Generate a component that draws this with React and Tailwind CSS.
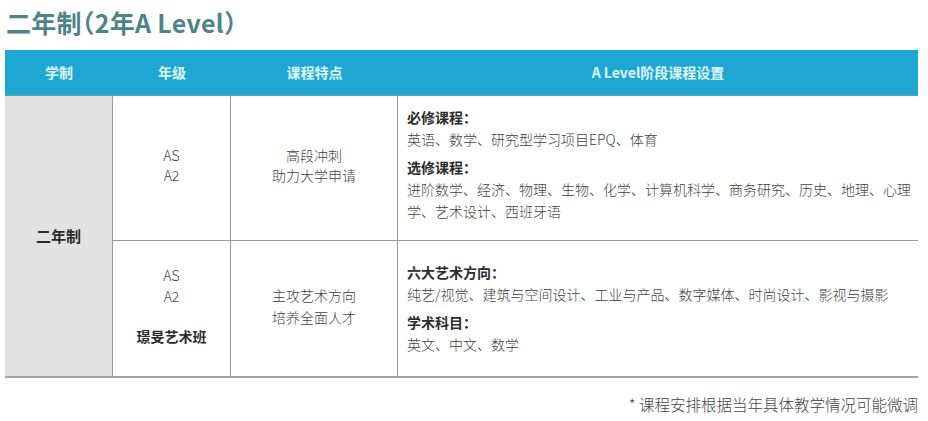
import React from 'react';

const font = { fontFamily: '"Noto Sans CJK SC", "Noto Sans", sans-serif' };

export default function App() {
  return (
    <div className="w-[928px] h-[421px] bg-white text-[#3f3f3f] overflow-hidden" style={font}>
      {/* 标题 */}
      <h1 className="pl-[6px] pt-[4px] h-[50px] text-[25px] font-bold leading-[36px] tracking-[0.3px] text-[#4f8487] [font-feature-settings:'halt']">
        二年制（2年A Level）
      </h1>

      <div className="ml-[5px] w-[913px]">
        {/* 表头 */}
        <div className="grid grid-cols-[108px_118px_167px_1fr] h-[46px] bg-[#1fa7d3] border-b border-[#5b9fb5] text-[14px] font-bold text-[#dff8ff]">
          <div className="flex items-center justify-center">学制</div>
          <div className="flex items-center justify-center">年级</div>
          <div className="flex items-center justify-center">课程特点</div>
          <div className="flex items-center justify-center">A Level阶段课程设置</div>
        </div>

        {/* 表体 */}
        <div className="grid grid-cols-[108px_118px_167px_1fr] grid-rows-[145px_135px] border-b-2 border-[#a5a5a5] text-[14px] font-light">
          <div className="row-span-2 bg-[#e2e2e2] border-r border-[#9c9c9c] flex items-center justify-center font-bold text-[15px] text-[#2b2b2b]">
            二年制
          </div>

          {/* 第一行 */}
          <div className="border-r border-b border-[#9c9c9c] flex flex-col items-center justify-center leading-[20px] pb-[6px]">
            <span>AS</span>
            <span>A2</span>
          </div>
          <div className="border-r border-b border-[#9c9c9c] flex flex-col items-center justify-center leading-[20px] pb-[6px]">
            <span>高段冲刺</span>
            <span>助力大学申请</span>
          </div>
          <div className="border-b border-[#9c9c9c] pl-[9px] pr-[2px] pt-[10px] leading-[22px]">
            <div className="font-bold text-[#2b2b2b]">必修课程：</div>
            <div>英语、数学、研究型学习项目EPQ、体育</div>
            <div className="mt-[6px] font-bold text-[#2b2b2b]">选修课程：</div>
            <div>进阶数学、经济、物理、生物、化学、计算机科学、商务研究、历史、地理、心理学、艺术设计、西班牙语</div>
          </div>

          {/* 第二行 */}
          <div className="border-r border-[#9c9c9c] flex flex-col items-center justify-center leading-[21px] pb-[6px]">
            <span>AS</span>
            <span>A2</span>
            <span className="mt-[19px] font-bold text-[#2b2b2b]">璟旻艺术班</span>
          </div>
          <div className="border-r border-[#9c9c9c] flex flex-col items-center justify-center leading-[22px] pb-[6px]">
            <span>主攻艺术方向</span>
            <span>培养全面人才</span>
          </div>
          <div className="pl-[9px] pr-[2px] pt-[20px] leading-[22px]">
            <div className="font-bold text-[#2b2b2b]">六大艺术方向：</div>
            <div>纯艺/视觉、建筑与空间设计、工业与产品、数字媒体、时尚设计、影视与摄影</div>
            <div className="mt-[6px] font-bold text-[#2b2b2b]">学术科目：</div>
            <div>英文、中文、数学</div>
          </div>
        </div>

        {/* 备注 */}
        <div className="flex justify-end pt-[15px] text-[15.5px] font-light text-[#444444]">
          * 课程安排根据当年具体教学情况可能微调
        </div>
      </div>
    </div>
  );
}
